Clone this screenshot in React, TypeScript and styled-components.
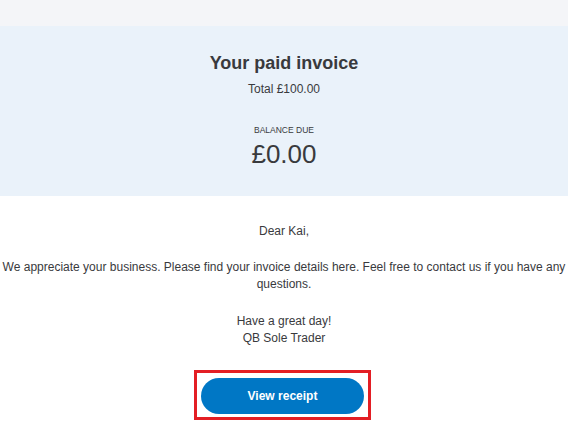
import React from "react";
import styled, { createGlobalStyle } from "styled-components";

const Global = createGlobalStyle`
  html, body { margin: 0; padding: 0; background: #ffffff; }
  body { font-family: Arial, "Liberation Sans", Helvetica, sans-serif; color: #393a3d; }
`;

const Page = styled.div`
  width: 568px;
  display: flex;
  flex-direction: column;
`;

const TopBand = styled.div`
  height: 26px;
  background: #f4f5f8;
`;

const Hero = styled.section`
  background: #eaf2fa;
  height: 170px;
  box-sizing: border-box;
  padding-top: 26px;
  display: flex;
  flex-direction: column;
  align-items: center;
`;

const Title = styled.h1`
  margin: 0;
  font-size: 18px;
  line-height: 22px;
  font-weight: 700;
`;

const Total = styled.div`
  margin-top: 7px;
  font-size: 12px;
  line-height: 16px;
`;

const BalanceLabel = styled.div`
  margin-top: 27px;
  font-size: 8.5px;
  line-height: 12px;
  text-transform: uppercase;
`;

const Amount = styled.div`
  margin-top: 3px;
  font-size: 26px;
  line-height: 30px;
`;

const Body = styled.section`
  display: flex;
  flex-direction: column;
  align-items: center;
  text-align: center;
  padding-top: 27px;
  font-size: 12px;
  line-height: 17px;
`;

const Para = styled.p<{ $gap?: number }>`
  margin: ${(p) => p.$gap ?? 0}px 0 0;
`;

const Highlight = styled.div`
  margin: 23px 3px 0 0;
  border: 3px solid #e31e24;
  padding: 5px 4px 3px 4px;
  display: flex;
`;

const Button = styled.button`
  width: 163px;
  height: 36px;
  border: none;
  border-radius: 18px;
  background: #0077c5;
  color: #ffffff;
  font-family: Arial, "Liberation Sans", Helvetica, sans-serif;
  font-size: 12px;
  font-weight: 700;
  padding: 0;
  cursor: pointer;
`;

export default function App() {
  return (
    <Page>
      <Global />
      <TopBand />
      <Hero>
        <Title>Your paid invoice</Title>
        <Total>Total £100.00</Total>
        <BalanceLabel>Balance due</BalanceLabel>
        <Amount>£0.00</Amount>
      </Hero>
      <Body>
        <Para>Dear Kai,</Para>
        <Para $gap={19}>
          We appreciate your business. Please find your invoice details here. Feel free to contact us if you have any
          questions.
        </Para>
        <Para $gap={20}>
          Have a great day!
          <br />
          QB Sole Trader
        </Para>
        <Highlight>
          <Button>View receipt</Button>
        </Highlight>
      </Body>
    </Page>
  );
}
